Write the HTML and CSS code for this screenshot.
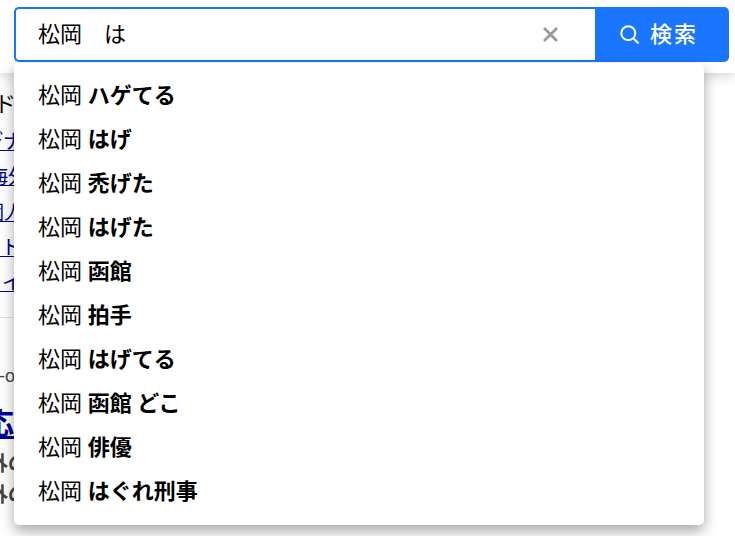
FILE: index.html
```
<!DOCTYPE html>
<html lang="ja">
  <head>
    <meta charset="utf-8">
    <title>松岡 は - 検索</title>
    <link rel="stylesheet" href="styles.css">
  </head>
  <body>
    <header class="header">
      <form class="search">
        <div class="search-field">
          <span class="search-query">松岡　は</span>
          <svg class="clear" width="17" height="17" viewBox="0 0 17 17">
            <path d="M2 2L15 15M15 2L2 15"/>
          </svg>
        </div>
        <button class="search-button" type="button">
          <svg class="lens" width="20" height="20" viewBox="0 0 20 20">
            <circle cx="8.3" cy="8.2" r="7"/>
            <path d="M13.3 13.2L18.6 18.5"/>
          </svg>
          <span class="search-label">検索</span>
        </button>
      </form>
      <ul class="suggest">
        <li>松岡 <b>ハゲてる</b></li>
        <li>松岡 <b>はげ</b></li>
        <li>松岡 <b>禿げた</b></li>
        <li>松岡 <b>はげた</b></li>
        <li>松岡 <b>函館</b></li>
        <li>松岡 <b>拍手</b></li>
        <li>松岡 <b>はげてる</b></li>
        <li>松岡 <b>函館 どこ</b></li>
        <li>松岡 <b>俳優</b></li>
        <li>松岡 <b>はぐれ刑事</b></li>
      </ul>
    </header>
    <main class="results">
      <div class="heading">ド</div>
      <ul class="related">
        <li><a class="w1" href="#">デナ</a></li>
        <li><a class="w2" href="#">海外</a></li>
        <li><a class="w3" href="#">個人</a></li>
        <li><a class="w4" href="#">ート</a></li>
        <li><a class="w5" href="#">ライ</a></li>
      </ul>
      <div class="entry">
        <div class="url">-o</div>
        <a class="title" href="#">応</a>
        <p class="summary">外の<br>外の</p>
      </div>
    </main>
  </body>
</html>
```

FILE: styles.css
```
* {
  box-sizing: border-box;
}
body {
  margin: 0;
  height: 536px;
  overflow: hidden;
  background: #fff;
  color: #000;
  font-family: "Liberation Sans", "Noto Sans CJK JP", sans-serif;
}
ul {
  list-style: none;
  margin: 0;
  padding: 0;
}
.header {
  position: relative;
  z-index: 1;
  height: 73px;
  padding: 7px 6px 0 14px;
  background: #fff;
  box-shadow: 0 2px 12px rgba(0, 0, 0, .2);
}
.search {
  display: flex;
  height: 55px;
}
.search-field {
  display: flex;
  align-items: center;
  justify-content: space-between;
  width: 581px;
  padding: 0 36px 0 22px;
  border: 2px solid #1a75ff;
  border-right: 0;
  border-radius: 5px 0 0 5px;
  font-size: 22px;
}
.search-query {
  padding-bottom: 6px;
}
.clear {
  fill: none;
  stroke: #999;
  stroke-width: 2.8;
}
.search-button {
  display: flex;
  align-items: center;
  gap: 10px;
  width: 134px;
  padding: 0 0 0 25px;
  border: 0;
  border-radius: 0 5px 5px 0;
  background: #1a75ff;
  color: #fff;
  font: 500 22px "Noto Sans CJK JP", sans-serif;
  letter-spacing: 2px;
}
.search-label {
  padding-bottom: 6px;
}
.lens {
  fill: none;
  stroke: #fff;
  stroke-width: 2;
}
.suggest {
  position: absolute;
  top: 63px;
  left: 14px;
  width: 690px;
  padding: 11px 24px;
  border-radius: 5px;
  background: #fff;
  box-shadow: 0 6px 14px rgba(0, 0, 0, .35);
  font-size: 22px;
  line-height: 44px;
  word-spacing: -.5px;
}
.results {
  white-space: nowrap;
  font-size: 20px;
}
.heading {
  height: 52px;
  padding-top: 17px;
  margin-left: -6px;
  font-size: 22px;
  line-height: 30px;
}
.related {
  width: 640px;
  height: 193px;
  border-bottom: 1px solid #e0e0e0;
  line-height: 35.3px;
}
.related a,
.title {
  color: #009;
}
.related a {
  text-decoration-thickness: 1px;
}
.w1 {
  margin-left: -17px;
}
.w2 {
  margin-left: -12px;
}
.w3 {
  margin-left: -16px;
}
.w4 {
  margin-left: -19px;
}
.w5 {
  margin-left: -18px;
}
.entry {
  padding-top: 46px;
}
.url {
  margin-left: -1px;
  color: #444;
  font-size: 18px;
  line-height: 24px;
}
.title {
  display: block;
  margin-left: -16px;
  font-size: 30px;
  font-weight: bold;
  line-height: 72px;
}
.summary {
  margin: -11px 0 0 -12px;
  color: #444;
  font-weight: bold;
  line-height: 31px;
}
```
